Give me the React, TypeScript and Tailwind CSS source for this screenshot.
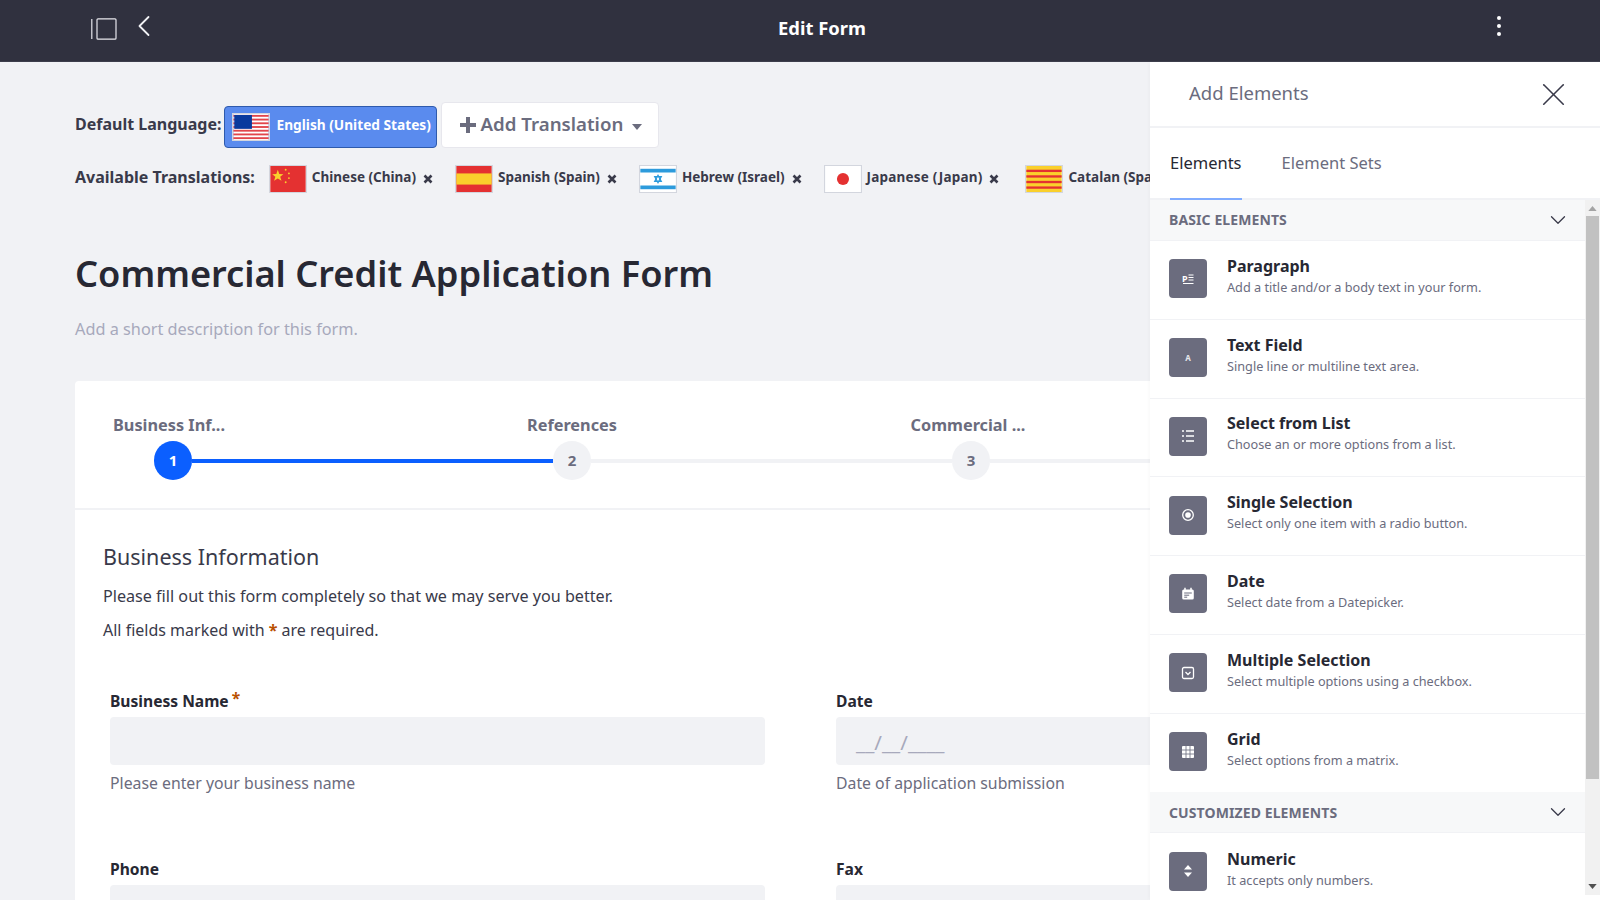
import { ChevronDown, ChevronLeft, X } from "lucide-react";
import type { ReactNode } from "react";

function FlagUS() {
  return (
    <svg viewBox="0 0 38 28" className="h-full w-full">
      <rect width="38" height="28" fill="#fff" />
      {[0, 4, 8, 12, 16, 20, 24].map((y) => (
        <rect key={y} y={y + 1} width="38" height="2" fill="#e2454b" />
      ))}
      <rect x="1" y="1" width="19" height="15" fill="#0a3a9e" />
    </svg>
  );
}

function FlagCN() {
  return (
    <svg viewBox="0 0 38 28" className="h-full w-full">
      <rect width="38" height="28" fill="#e43131" />
      <polygon points="8,4 9.6,8.6 14,8.8 10.6,11.6 12,16 8,13.4 4,16 5.4,11.6 2,8.8 6.400,8.6" fill="#fad02c" />
      <circle cx="16.5" cy="4" r="1" fill="#fad02c" />
      <circle cx="20" cy="8" r="1" fill="#fad02c" />
      <circle cx="20" cy="13" r="1" fill="#fad02c" />
      <circle cx="16.5" cy="17.5" r="1" fill="#fad02c" />
    </svg>
  );
}

function FlagES() {
  return (
    <svg viewBox="0 0 38 28" className="h-full w-full">
      <rect width="38" height="28" fill="#e43131" />
      <rect y="8" width="38" height="12" fill="#fad02c" />
    </svg>
  );
}

function FlagIL() {
  return (
    <svg viewBox="0 0 38 28" className="h-full w-full">
      <rect width="38" height="28" fill="#fff" />
      <rect y="3" width="38" height="4" fill="#2d9bdc" />
      <rect y="21" width="38" height="4" fill="#2d9bdc" />
      <polygon points="19,10 22.5,16.5 15.5,16.5" fill="none" stroke="#2d9bdc" strokeWidth="1.4" />
      <polygon points="19,18 22.5,11.5 15.5,11.5" fill="none" stroke="#2d9bdc" strokeWidth="1.4" />
    </svg>
  );
}

function FlagJP() {
  return (
    <svg viewBox="0 0 38 28" className="h-full w-full">
      <rect width="38" height="28" fill="#fff" />
      <circle cx="19" cy="14" r="6.5" fill="#e43131" />
    </svg>
  );
}

function FlagCA() {
  return (
    <svg viewBox="0 0 38 28" className="h-full w-full">
      <rect width="38" height="28" fill="#fad02c" />
      {[4, 10, 16, 22].map((y) => (
        <rect key={y} y={y} width="38" height="2.5" fill="#e43131" />
      ))}
    </svg>
  );
}

function Flag({ children }: { children: ReactNode }) {
  return <span className="block h-[28px] w-[38px] shrink-0 border border-[#d3d6de]">{children}</span>;
}

const translations = [
  { name: "Chinese (China)", flag: <FlagCN />, gap: "mr-[22px]" },
  { name: "Spanish (Spain)", flag: <FlagES />, gap: "mr-[22px]" },
  { name: "Hebrew (Israel)", flag: <FlagIL />, gap: "mr-[22px]" },
  { name: "Japanese (Japan)", flag: <FlagJP />, gap: "ml-0 mr-[26px] [&>span:nth-child(2)]:tracking-[0.2px]" },
  { name: "Catalan (Spain)", flag: <FlagCA />, gap: "mr-[22px]" },
];

function SmallX() {
  return (
    <svg viewBox="0 0 10 10" className="h-[10px] w-[10px] shrink-0">
      <path d="M1.5 1.5 8.5 8.5M8.5 1.5 1.5 8.5" stroke="#393a4a" strokeWidth="2.6" />
    </svg>
  );
}

const glyph = "h-[14px] w-[14px]";

const basicElements = [
  {
    title: "Paragraph",
    text: "Add a title and/or a body text in your form.",
    icon: (
      <svg viewBox="0 0 14 14" className={glyph}>
        <text x="1" y="9.5" fontSize="9" fontWeight="700" fill="#fff" fontFamily="'Noto Sans', sans-serif">P</text>
        <path d="M7.5 3h5M7.5 5.500h5M7.5 8h5M2 11.500h10.500" stroke="#fff" strokeWidth="1" />
      </svg>
    ),
  },
  {
    title: "Text Field",
    text: "Single line or multiline text area.",
    icon: <span className="text-[8px] leading-none font-bold text-[#e7e7ed]">A</span>,
  },
  {
    title: "Select from List",
    text: "Choose an or more options from a list.",
    icon: (
      <svg viewBox="0 0 14 14" className={glyph}>
        <path d="M1 2h2M1 7h2M1 12h2M5 2h8M5 7h8M5 12h8" stroke="#fff" strokeWidth="1.4" />
      </svg>
    ),
  },
  {
    title: "Single Selection",
    text: "Select only one item with a radio button.",
    icon: (
      <svg viewBox="0 0 14 14" className={glyph}>
        <circle cx="7" cy="7" r="5.3" fill="none" stroke="#fff" strokeWidth="1.3" />
        <circle cx="7" cy="7" r="2.8" fill="#fff" />
      </svg>
    ),
  },
  {
    title: "Date",
    text: "Select date from a Datepicker.",
    icon: (
      <svg viewBox="0 0 14 14" className={glyph}>
        <rect x="1.2" y="2.5" width="11.6" height="10" rx="1.5" fill="#fff" />
        <path d="M4 .8v3M10 .8v3" stroke="#fff" strokeWidth="1.5" />
        <path d="M3.2 6h7.6M3.2 8.2h5M3.2 10.2h3" stroke="#6b6c7e" strokeWidth="1" />
      </svg>
    ),
  },
  {
    title: "Multiple Selection",
    text: "Select multiple options using a checkbox.",
    icon: (
      <svg viewBox="0 0 14 14" className={glyph}>
        <rect x="1.5" y="1.5" width="11" height="11" rx="1.5" fill="none" stroke="#fff" strokeWidth="1.3" />
        <path d="M4.5 6 7 8.5 9.5 6" fill="none" stroke="#fff" strokeWidth="1.3" />
      </svg>
    ),
  },
  {
    title: "Grid",
    text: "Select options from a matrix.",
    icon: (
      <svg viewBox="0 0 14 14" className={glyph}>
        <rect x="1" y="1" width="12" height="12" rx="1" fill="#fff" />
        <path d="M5 1v12M9 1v12M1 5h12M1 9h12" stroke="#6b6c7e" strokeWidth="0.8" />
      </svg>
    ),
  },
];

function ElementRow({ title, text, icon, last, lower }: { title: string; text: string; icon: ReactNode; last?: boolean; lower?: boolean }) {
  return (
    <div className={`flex h-[78.75px] shrink-0 items-center gap-[20px] pb-[2px] pl-[19px] ${last ? "" : "border-b border-[#f1f2f5]"}`}>
      <span className="flex h-[39px] w-[38px] shrink-0 items-center justify-center rounded-[4px] bg-[#6b6c7e]">{icon}</span>
      <div className={`min-w-0 ${lower ? "-mt-[2px]" : "-mt-[4px]"}`}>
        <p className="text-[16px] leading-[21px] font-bold text-[#272833]">{title}</p>
        <p className="text-[12.7px] leading-[21px] text-[#6b6c7e]">{text}</p>
      </div>
    </div>
  );
}

function SectionHeader({ label, lower }: { label: string; lower?: boolean }) {
  return (
    <div className="flex h-[41px] shrink-0 items-center justify-between border-b border-[#f1f2f5] bg-[#f7f8f9] pr-[14px] pl-[19px]">
      <span className={`text-[14px] font-bold tracking-[0.1px] text-[#6b6c7e] ${lower ? "" : "pb-[2px]"}`}>{label}</span>
      <ChevronDown size={26} strokeWidth={1.2} className="text-[#393a4a]" />
    </div>
  );
}

function Step({ n, label, active, offset }: { n: number; label: string; active?: boolean; offset: string }) {
  return (
    <div className="w-[399px] shrink-0">
      <p className={`w-[150px] text-center text-[16.3px] leading-[22px] font-bold whitespace-nowrap text-[#6b6c7e] ${offset}`}>{label}</p>
      <div className="mt-[5px] -mr-[56px] ml-[56px] flex items-center">
        <span
          className={`z-10 flex h-[39px] w-[38px] shrink-0 items-center justify-center rounded-full text-[15px] font-bold ${
            active ? "bg-[#0b5fff] text-white" : "bg-[#f1f2f5] text-[#6b6c7e]"
          }`}
        >
          {n}
        </span>
        <span className={`h-[4px] flex-1 ${active ? "bg-[#0b5fff]" : "bg-[#f1f2f5]"}`} />
      </div>
    </div>
  );
}

function Field({ label, help, required, mask }: { label: string; help?: string; required?: boolean; mask?: string }) {
  return (
    <div>
      <p className="text-[15.6px] leading-[22px] font-bold text-[#272833]">
        {label}
        {required ? <span className="ml-[3px] align-[3px] leading-none text-[#b95000]">*</span> : null}
      </p>
      <div className="mt-[5px] flex h-[48px] items-center rounded-[4px] bg-[#f1f2f5] px-[20px] pt-[2px] text-[20.6px] text-[#a7a9bc]">{mask}</div>
      {help ? <p className="mt-[7px] text-[15.8px] leading-[22px] text-[#6b6c7e]">{help}</p> : null}
    </div>
  );
}

export default function App() {
  return (
    <div className="flex h-[900px] w-[1600px] flex-col overflow-hidden bg-[#f1f2f5] font-['Noto_Sans',sans-serif]">
      <header className="relative flex h-[62px] shrink-0 items-start border-b border-[#3d3e4c] bg-[#30313f] text-white">
        <svg viewBox="0 0 26 22" className="mt-[18px] ml-[91px] h-[22px] w-[26px]" fill="none" stroke="#e7e7ed" strokeWidth="1.2">
          <path d="M.8 1v20" />
          <rect x="6" y=".8" width="19" height="20.4" rx="1" />
        </svg>
        <ChevronLeft size={36} strokeWidth={1.2} className="mt-[8px] ml-[9px] text-[#f1f2f5]" />
        <h1 className="flex-1 pt-[14px] pr-[15px] text-center text-[18.4px] leading-[28px] font-bold">Edit Form</h1>
        <span className="mt-[16px] mr-[99px] flex flex-col gap-[4px]">
          <i className="h-[4px] w-[4px] rounded-full bg-white" />
          <i className="h-[4px] w-[4px] rounded-full bg-white" />
          <i className="h-[4px] w-[4px] rounded-full bg-white" />
        </span>
      </header>

      <div className="flex min-h-0 flex-1">
        <main className="min-w-0 flex-1 overflow-hidden pt-[40px] pl-[75px]">
          <div className="flex items-start whitespace-nowrap">
            <span className="mr-[2px] flex h-[45px] items-center pb-[2px] text-[16px] font-bold text-[#393a4a]">Default Language:</span>
            <span className="mt-[4px] flex h-[42px] w-[213px] items-center rounded-[4px] border border-[#2e5aac] bg-[#5a8bee] pl-[7px] text-[13.7px] font-bold text-white">
              <Flag>
                <FlagUS />
              </Flag>
              <span className="ml-[7px] pb-[3px]">English (United States)</span>
            </span>
            <span className="ml-[4px] flex h-[46px] w-[218px] items-center rounded-[4px] border border-[#e7e7ed] bg-white pl-[18px] text-[18.7px] font-semibold text-[#6b6c7e]">
              <svg viewBox="0 0 16 16" className="mr-[5px] h-[16px] w-[16px] fill-[#6b6c7e]">
                <path d="M6 0h4v6h6v4h-6v6H6v-6H0V6h6z" />
              </svg>
              <span className="pb-[2px]">Add Translation</span>
              <svg viewBox="0 0 10 6" className="mt-[3px] ml-[9px] h-[6px] w-[10px] fill-[#6b6c7e]">
                <path d="M0 0h10L5 6z" />
              </svg>
            </span>
          </div>

          <div className="mt-[17px] flex items-center whitespace-nowrap text-[13.5px] font-bold text-[#393a4a]">
            <span className="mr-[14px] pb-[4px] text-[16px]">Available Translations:</span>
            {translations.map((t) => (
              <span key={t.name} className={`flex items-center gap-[5px] ${t.gap}`}>
                <Flag>{t.flag}</Flag>
                <span className="pb-[3px]">{t.name}</span>
                <span className="ml-[2px] flex">
                  <SmallX />
                </span>
              </span>
            ))}
          </div>

          <h2 className="mt-[52px] text-[36.2px] leading-[56px] font-semibold whitespace-nowrap text-[#272833]">Commercial Credit Application Form</h2>
          <p className="mt-[16px] text-[16.3px] leading-[24px] text-[#a7a9bc]">Add a short description for this form.</p>

          <section className="mt-[40px] w-[1300px] rounded-[4px] bg-white">
            <div className="flex h-[129px] border-b-2 border-[#f1f2f5] pt-[33px] pl-[23px]">
              <Step n={1} label="Business Inf..." active offset="-translate-x-[4px]" />
              <Step n={2} label="References" offset="" />
              <Step n={3} label="Commercial ..." offset="-translate-x-[3px]" />
            </div>
            <div className="pt-[31px] pl-[28px]">
              <h3 className="text-[21.5px] leading-[32px] font-normal text-[#393a4a]">Business Information</h3>
              <p className="mt-[11px] text-[16.15px] leading-[24px] text-[#393a4a]">Please fill out this form completely so that we may serve you better.</p>
              <p className="mt-[10px] text-[16px] leading-[24px] text-[#393a4a]">
                All fields marked with <span className="font-bold text-[#b95000]">*</span> are required.
              </p>
            </div>
            <div className="mt-[48px] grid grid-cols-[655px_655px] gap-x-[71px] gap-y-[63.5px] pl-[35px]">
              <Field label="Business Name" required help="Please enter your business name" />
              <Field label="Date" help="Date of application submission" mask="__/__/____" />
              <Field label="Phone" />
              <Field label="Fax" />
            </div>
          </section>
        </main>

        <aside className="flex w-[450px] shrink-0 flex-col bg-white shadow-[-2px_0_3px_rgba(0,0,0,0.02)]">
          <div className="flex h-[66px] shrink-0 items-center justify-between border-b-2 border-[#f1f2f5] pr-[27px] pl-[39px]">
            <span className="pb-[2px] text-[18.5px] text-[#6b6c7e]">Add Elements</span>
            <X size={39} strokeWidth={1} className="text-[#393a4a]" />
          </div>
          <div className="flex h-[72px] shrink-0 gap-[40px] border-b-2 border-[#f1f2f5] pl-[20px] text-[16.5px]">
            <span className="flex h-[72px] items-center border-b-2 border-[#80acff] text-[#272833]">Elements</span>
            <span className="flex h-[70px] items-center text-[#6b6c7e]">Element Sets</span>
          </div>
          <div className="mb-[5px] flex min-h-0 flex-1">
            <div className="flex min-w-0 flex-1 flex-col overflow-hidden">
              <SectionHeader label="BASIC ELEMENTS" />
              {basicElements.map((el, i) => (
                <ElementRow key={el.title} {...el} last={i === basicElements.length - 1} />
              ))}
              <SectionHeader label="CUSTOMIZED ELEMENTS" lower />
              <ElementRow
                title="Numeric"
                text="It accepts only numbers."
                lower
                icon={
                  <svg viewBox="0 0 14 14" className={glyph}>
                    <path d="M7 1 11 5.5H3zM7 13 3 8.500h8z" fill="#fff" />
                  </svg>
                }
              />
            </div>
            <div className="flex w-[15px] shrink-0 flex-col items-center bg-[#f1f1f1]">
              <svg viewBox="0 0 10 6" className="mt-[6px] h-[5px] w-[9px] fill-[#a3a3a3]">
                <path d="M5 0l5 6H0z" />
              </svg>
              <span className="mt-[5px] h-[563px] w-[13px] bg-[#c1c1c1]" />
              <svg viewBox="0 0 10 6" className="mt-auto mb-[6px] h-[5px] w-[9px] fill-[#505050]">
                <path d="M0 0h10L5 6z" />
              </svg>
            </div>
          </div>
        </aside>
      </div>
    </div>
  );
}
